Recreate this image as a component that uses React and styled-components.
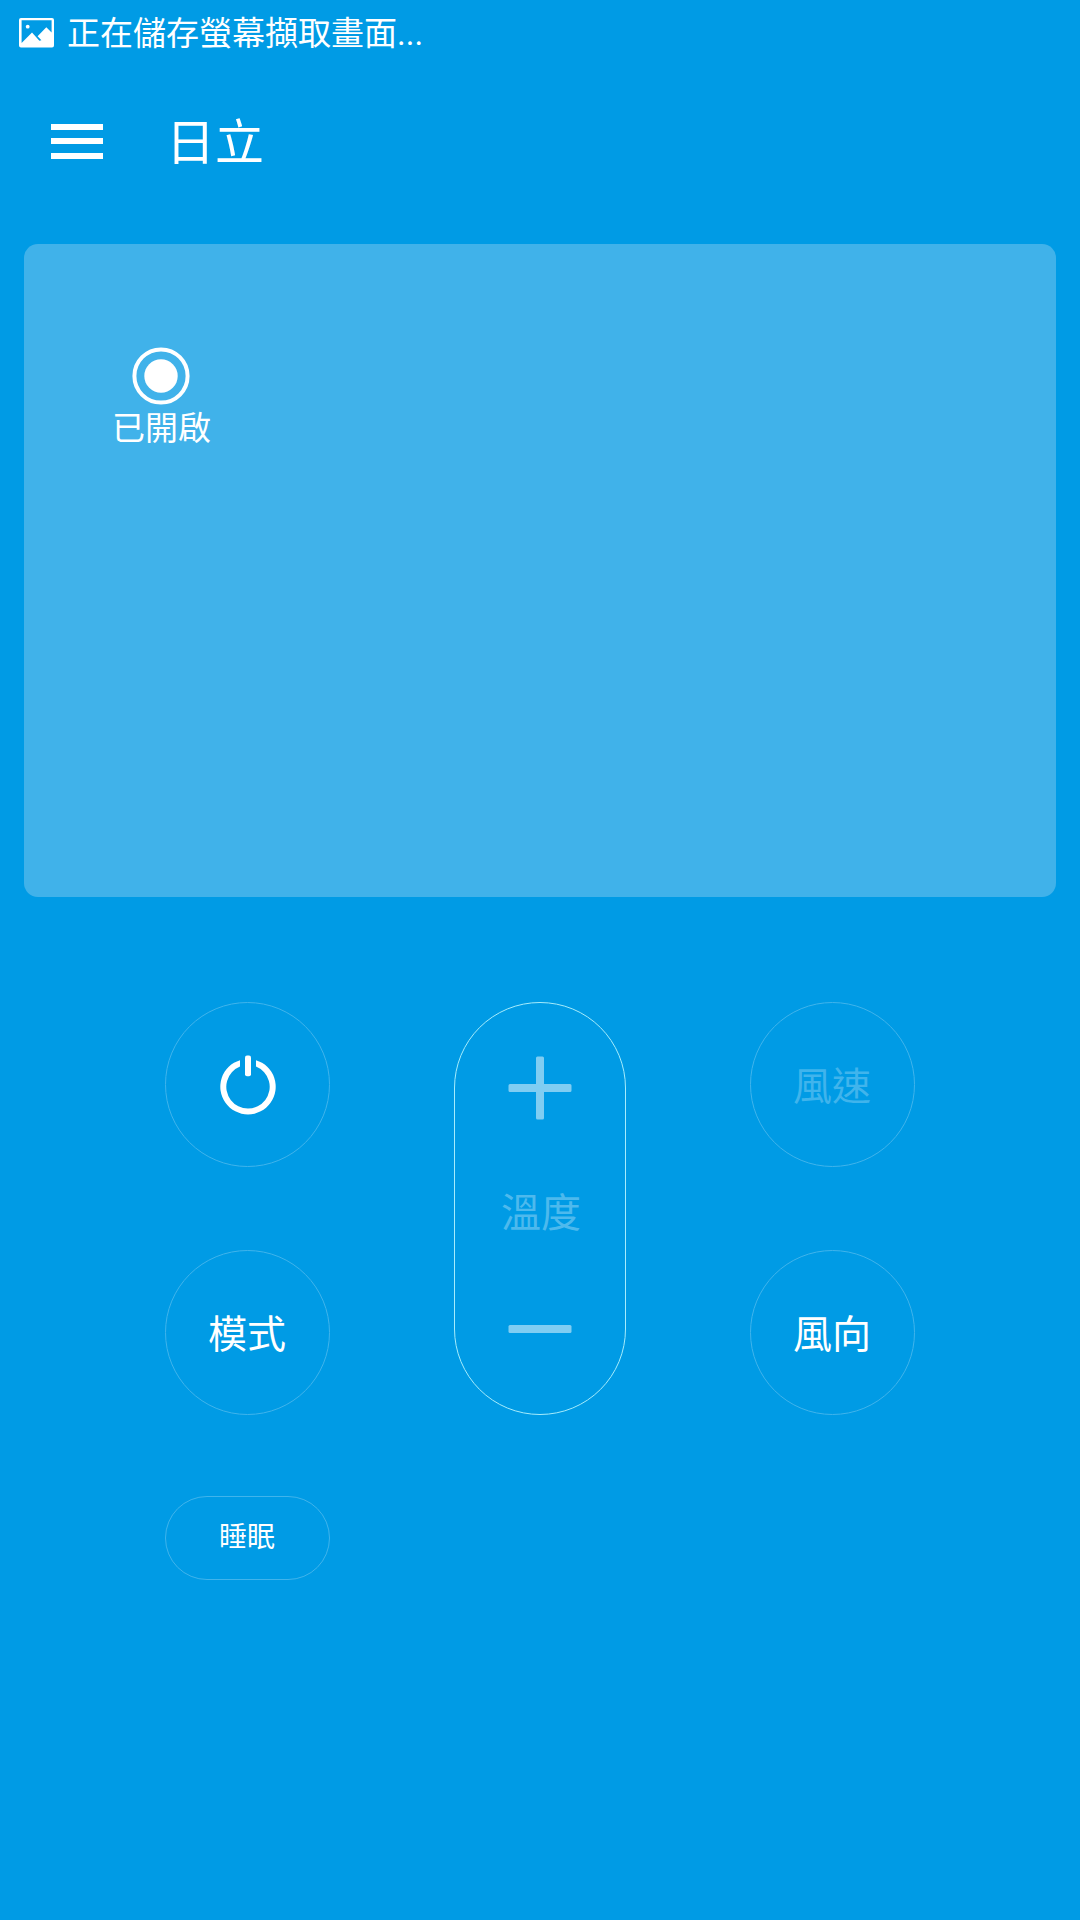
import React from "react";
import styled, { createGlobalStyle, css } from "styled-components";

const App = () => {
  return (
    <Screen>
      <GlobalStyle />
      <StatusBar>
        <PictureIcon viewBox="0 0 35 30">
          <path
            fillRule="evenodd"
            d="M2 0H33Q35 0 35 2V27.500Q35 29.500 33 29.500H2Q0 29.500 0 27.500V2Q0 0 2 0ZM2.600 2.300V25L13 14.600L20.400 22.800L22.400 22.200L18.600 18.200L27.300 9.200L32.600 14.500V2.300Z"
          />
          <circle cx="8.700" cy="8.700" r="1.900" />
        </PictureIcon>
        <StatusText>正在儲存螢幕擷取畫面...</StatusText>
      </StatusBar>
      <Header>
        <MenuButton aria-label="menu">
          <MenuLine />
          <MenuLine />
          <MenuLine />
        </MenuButton>
        <Title>日立</Title>
      </Header>
      <DisplayPanel>
        <PowerState>
          <StateIcon viewBox="0 0 58 58">
            <circle cx="29" cy="29" r="26.600" fill="none" stroke="#fff" strokeWidth="4" />
            <circle cx="29" cy="29" r="16.700" fill="#fff" />
          </StateIcon>
          <StateText>已開啟</StateText>
        </PowerState>
      </DisplayPanel>
      <Remote>
        <Column>
          <RoundButton aria-label="power">
            <PowerIcon viewBox="0 0 56 60">
              <path
                fill="#fff"
                d="M20 5.200A27.700 27.700 0 1 0 36 5.200V11.600A21.700 21.700 0 1 1 20 11.600Z"
              />
              <rect x="25" y="0.500" width="6" height="20.700" rx="2" fill="#fff" />
            </PowerIcon>
          </RoundButton>
          <RoundButton>
            <Label>模式</Label>
          </RoundButton>
          <SleepButton>
            <Label $small>睡眠</Label>
          </SleepButton>
        </Column>
        <TempControl>
          <SignIcon viewBox="0 0 64 64">
            <path d="M29.500 0.500H34.500Q36 0.500 36 2V28H62Q63.500 28 63.500 29.500V34.500Q63.500 36 62 36H36V62Q36 63.500 34.500 63.500H29.500Q28 63.500 28 62V36H2Q0.500 36 0.500 34.500V29.500Q0.500 28 2 28H28V2Q28 0.500 29.500 0.500Z" />
          </SignIcon>
          <TempLabel>溫度</TempLabel>
          <SignIcon viewBox="0 0 64 64">
            <rect x="0.500" y="28" width="63" height="8" rx="1.500" />
          </SignIcon>
        </TempControl>
        <Column>
          <RoundButton>
            <Label $disabled>風速</Label>
          </RoundButton>
          <RoundButton>
            <Label>風向</Label>
          </RoundButton>
        </Column>
      </Remote>
    </Screen>
  );
};
export default App;

const GlobalStyle = createGlobalStyle`
  * {
    box-sizing: border-box;
  }
  body {
    margin: 0;
    background-color: #009be5;
  }
`;

const Screen = styled.div`
  width: 1080px;
  height: 1920px;
  overflow: hidden;
  background-color: #009be5;
  color: #ffffff;
  font-family: Roboto, "Noto Sans CJK TC", sans-serif;
`;

const StatusBar = styled.div`
  display: flex;
  align-items: center;
  height: 66px;
  padding-left: 19px;
`;
const PictureIcon = styled.svg`
  width: 35px;
  height: 30px;
  fill: #ffffff;
`;
const StatusText = styled.span`
  margin-left: 13px;
  padding-top: 2px;
  font-size: 33px;
  line-height: 64px;
`;

const Header = styled.header`
  display: flex;
  align-items: center;
  height: 150px;
  padding-left: 51px;
`;
const MenuButton = styled.button`
  display: flex;
  flex-direction: column;
  justify-content: space-between;
  width: 52px;
  height: 35px;
  padding: 0;
  border: none;
  background: none;
`;
const MenuLine = styled.span`
  height: 6px;
  background-color: #ffffff;
`;
const Title = styled.h1`
  margin: 0 0 0 63px;
  padding-top: 5px;
  font-size: 49px;
  font-weight: normal;
  line-height: 72px;
`;

const DisplayPanel = styled.section`
  height: 653px;
  margin: 28px 24px 0;
  padding: 103px 0 0 89px;
  border-radius: 14px;
  background-color: #40b2ea;
`;
const PowerState = styled.div`
  display: flex;
  flex-direction: column;
  align-items: center;
  width: 98px;
`;
const StateIcon = styled.svg`
  width: 58px;
  height: 58px;
  margin-left: -2px;
`;
const StateText = styled.span`
  margin: 2px 0 0 -1px;
  font-size: 33px;
  line-height: 44px;
  white-space: nowrap;
`;

const Remote = styled.div`
  display: flex;
  align-items: flex-start;
  justify-content: space-between;
  margin-top: 105px;
  padding: 0 165px;
`;
const Column = styled.div`
  display: flex;
  flex-direction: column;
`;
const outline = css`
  display: flex;
  align-items: center;
  justify-content: center;
  padding: 0;
  border: 1px solid #40b4ec;
  background: none;
  color: inherit;
  font-family: inherit;
`;
const RoundButton = styled.button`
  ${outline}
  width: 165px;
  height: 165px;
  border-radius: 50%;
  & + & {
    margin-top: 83px;
  }
`;
const SleepButton = styled.button`
  ${outline}
  width: 165px;
  height: 84px;
  margin-top: 81px;
  border-radius: 42px;
`;
const PowerIcon = styled.svg`
  width: 56px;
  height: 60px;
  margin: 1px 0 0 1px;
`;
const Label = styled.span`
  padding: ${({ $small }) => ($small ? "0 1px 0 0" : "6px 1px 0 0")};
  font-size: ${({ $small }) => ($small ? "28px" : "39px")};
  line-height: 1.5;
  color: ${({ $disabled }) => ($disabled ? "#40b4ec" : "#ffffff")};
`;

const TempControl = styled.div`
  display: flex;
  flex-direction: column;
  align-items: center;
  justify-content: space-between;
  width: 172px;
  height: 413px;
  padding: 53px 0 53px;
  border: 1px solid #a6ecfc;
  border-radius: 86px;
`;
const SignIcon = styled.svg`
  width: 64px;
  height: 64px;
  fill: #80cdf2;
`;
const TempLabel = styled.span`
  padding: 11px 0 0 2px;
  font-size: 40px;
  line-height: 58px;
  color: #4db9ed;
`;
